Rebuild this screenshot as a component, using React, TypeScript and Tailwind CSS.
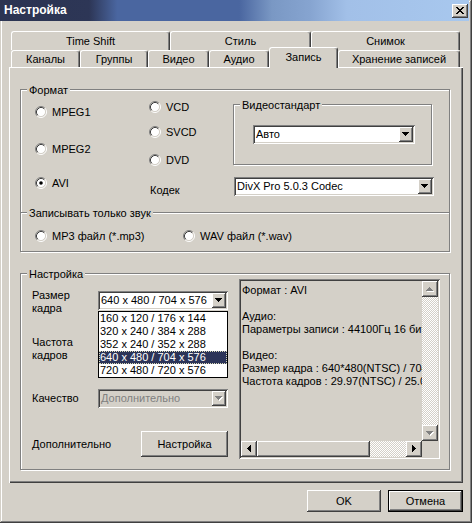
import React from "react";

// classic win9x bevels
const raised =
    "shadow-[inset_-1px_-1px_#404040,inset_1px_1px_#ffffff,inset_-2px_-2px_#808080,inset_2px_2px_#d4d0c8]";
const sunken =
    "shadow-[inset_1px_1px_#808080,inset_-1px_-1px_#ffffff,inset_2px_2px_#404040,inset_-2px_-2px_#d4d0c8]";
const etched = "border border-[#808080] shadow-[inset_1px_1px_#ffffff,1px_1px_#ffffff]";
const checker =
    "bg-[repeating-conic-gradient(#ffffff_0%_25%,#d4d0c8_0%_50%)] bg-[length:2px_2px]";

type Dir = "up" | "down" | "left" | "right";

const Arrow = ({ dir, disabled }: { dir: Dir; disabled?: boolean }) => {
    const rows = [
        [0, 7],
        [1, 5],
        [2, 3],
        [3, 1],
    ];
    const vertical = dir === "up" || dir === "down";
    const rects = (color: string, d: number) =>
        rows.map(([off, len], i) => {
            const step = dir === "down" || dir === "right" ? i : 3 - i;
            return vertical ? (
                <rect key={color + i} x={off + d} y={step + d} width={len} height={1} fill={color} />
            ) : (
                <rect key={color + i} x={step + d} y={off + d} width={1} height={len} fill={color} />
            );
        });
    return (
        <svg width={vertical ? 8 : 5} height={vertical ? 5 : 8} className="shrink-0">
            {disabled && rects("#ffffff", 1)}
            {rects(disabled ? "#808080" : "#000000", 0)}
        </svg>
    );
};

const Radio = ({ checked }: { checked?: boolean }) => (
    <svg width="12" height="12" viewBox="0 0 12 12" className="shrink-0">
        <circle cx="6" cy="6" r="4.5" fill="#ffffff" />
        <path d="M2.11 9.89 A5.5 5.5 0 0 1 9.89 2.11" fill="none" stroke="#808080" />
        <path d="M9.89 2.11 A5.5 5.5 0 0 1 2.11 9.89" fill="none" stroke="#ffffff" />
        <path d="M2.82 9.18 A4.5 4.5 0 0 1 9.18 2.82" fill="none" stroke="#404040" />
        <path d="M9.18 2.82 A4.5 4.5 0 0 1 2.82 9.18" fill="none" stroke="#d4d0c8" />
        {checked && <circle cx="6" cy="6" r="1.8" fill="#000000" />}
    </svg>
);

const RadioItem = ({ label, checked }: { label: string; checked?: boolean }) => (
    <div className="flex items-center h-[12px] whitespace-nowrap">
        <Radio checked={checked} />
        <span className="ml-[5px]">{label}</span>
    </div>
);

const Combo = ({
    value,
    width,
    disabled,
}: {
    value: string;
    width: string;
    disabled?: boolean;
}) => (
    <div
        className={`flex h-[19px] p-[2px] ${width} ${sunken} ${
            disabled ? "bg-[#d4d0c8] text-[#808080]" : "bg-white"
        }`}
    >
        <div className="flex-1 pl-[1px] leading-[15px] whitespace-nowrap overflow-hidden">
            {value}
        </div>
        <div
            className={`w-[14px] h-[15px] flex items-center justify-center bg-[#d4d0c8] ${raised}`}
        >
            <Arrow dir="down" disabled={disabled} />
        </div>
    </div>
);

const Group = ({
    label,
    className,
    children,
}: {
    label: string;
    className: string;
    children?: React.ReactNode;
}) => (
    <div className={`relative ${etched} ${className}`}>
        <span className="absolute left-[6px] -top-[6px] px-[2px] bg-[#d4d0c8] leading-[13px] whitespace-nowrap">
            {label}
        </span>
        {children}
    </div>
);

const ScrollBtn = ({ dir, disabled }: { dir: Dir; disabled?: boolean }) => (
    <div
        className={`w-[16px] h-[16px] shrink-0 flex items-center justify-center bg-[#d4d0c8] ${raised}`}
    >
        <Arrow dir={dir} disabled={disabled} />
    </div>
);

const topTabs = [
    { label: "Time Shift", w: "w-[159px]" },
    { label: "Стиль", w: "w-[141px]" },
    { label: "Снимок", w: "w-[149px]" },
];

const bottomTabs = [
    { label: "Каналы", w: "w-[69px]" },
    { label: "Группы", w: "w-[68px]" },
    { label: "Видео", w: "w-[61px]" },
    { label: "Аудио", w: "w-[60px]" },
    { label: "Запись", w: "w-[69px]", active: true },
    { label: "Хранение записей", w: "w-[122px]" },
];

const tabBase =
    "flex items-center justify-center whitespace-nowrap border-l border-t border-r border-white border-r-[#404040] rounded-t-[3px] shadow-[inset_-1px_0_#808080]";

const sizes = [
    "160 x 120 / 176 x 144",
    "320 x 240 / 384 x 288",
    "352 x 240 / 352 x 288",
    "640 x 480 / 704 x 576",
    "720 x 480 / 720 x 576",
];

const info = [
    "Формат : AVI",
    "",
    "Аудио:",
    "Параметры записи : 44100Гц 16 бит стерео",
    "",
    "Видео:",
    "Размер кадра : 640*480(NTSC) / 704*576(PAL)",
    "Частота кадров : 29.97(NTSC) / 25.00(PAL)",
];

export default function App() {
    return (
        <div className="w-[472px] h-[523px] flex flex-col overflow-hidden bg-[#d4d0c8] text-black text-[11px] leading-[13px] font-['Liberation_Sans',Arial,sans-serif] shadow-[inset_-1px_-1px_#404040,inset_1px_1px_#d4d0c8,inset_-2px_-2px_#808080,inset_2px_2px_#ffffff]">
            {/* title bar */}
            <div className="h-[21px] mr-[3px] flex items-center pl-[4px] pr-[1px] bg-[linear-gradient(to_right,#2b3452_0%,#2d3656_19%,#4a66a0_25%,#4a66a0_51%,#7a98c4_58%,#86a4d0_66%,#a2c0e8_74%,#a8c8ee_100%)]">
                <span className="flex-1 text-white font-bold text-[12px]">Настройка</span>
                <div
                    className={`w-[16px] h-[14px] flex items-center justify-center bg-[#d4d0c8] ${raised}`}
                >
                    <svg width="8" height="7">
                        {[0, 1, 2, 3, 4, 5, 6].map((i) => (
                            <React.Fragment key={i}>
                                <rect x={i} y={i} width={2} height={1} fill="#000" />
                                <rect x={6 - i} y={i} width={2} height={1} fill="#000" />
                            </React.Fragment>
                        ))}
                    </svg>
                </div>
            </div>

            {/* tabs */}
            <div className="mt-[10px] ml-[11px] h-[19px] flex">
                {topTabs.map((t) => (
                    <div key={t.label} className={`${tabBase} ${t.w} h-full`}>
                        {t.label}
                    </div>
                ))}
            </div>
            <div className="ml-[11px] h-[17px] flex items-start">
                {bottomTabs.map((t) =>
                    t.active ? (
                        <div
                            key={t.label}
                            className={`${tabBase} ${t.w} -mt-[3px] h-[21px] pb-[2px] relative z-10 bg-[#d4d0c8]`}
                        >
                            {t.label}
                        </div>
                    ) : (
                        <div key={t.label} className={`${tabBase} ${t.w} h-full`}>
                            {t.label}
                        </div>
                    )
                )}
            </div>

            {/* tab page */}
            <div className="ml-[9px] w-[454px] h-[416px] flex flex-col shadow-[inset_1px_1px_#ffffff,inset_-1px_-1px_#404040,inset_-2px_-2px_#808080]">
                <Group label="Формат" className="mt-[22px] ml-[11px] w-[430px] h-[124px] flex">
                    <div className="ml-[14px] w-[114px] flex flex-col">
                        <div className="mt-[16px]">
                            <RadioItem label="MPEG1" />
                        </div>
                        <div className="mt-[25px]">
                            <RadioItem label="MPEG2" />
                        </div>
                        <div className="mt-[22px]">
                            <RadioItem label="AVI" checked />
                        </div>
                    </div>
                    <div className="w-[84px] flex flex-col">
                        <div className="mt-[11px]">
                            <RadioItem label="VCD" />
                        </div>
                        <div className="mt-[13px]">
                            <RadioItem label="SVCD" />
                        </div>
                        <div className="mt-[16px]">
                            <RadioItem label="DVD" />
                        </div>
                        <div className="mt-[18px] pl-[1px]">Кодек</div>
                    </div>
                    <div className="flex flex-col">
                        <Group label="Видеостандарт" className="mt-[14px] w-[199px] h-[61px]">
                            <div className="ml-[19px] mt-[20px]">
                                <Combo value="Авто" width="w-[162px]" />
                            </div>
                        </Group>
                        <div className="mt-[12px] ml-[1px]">
                            <Combo value="DivX Pro 5.0.3 Codec" width="w-[200px]" />
                        </div>
                    </div>
                </Group>

                <Group label="Записывать только звук" className="-mt-[1px] ml-[11px] w-[430px] h-[40px] flex">
                    <div className="mt-[17px] ml-[14px] w-[148px]">
                        <RadioItem label="MP3 файл (*.mp3)" />
                    </div>
                    <div className="mt-[17px]">
                        <RadioItem label="WAV файл (*.wav)" />
                    </div>
                </Group>

                <Group label="Настройка" className="mt-[21px] ml-[11px] w-[430px] h-[197px] flex">
                    <div className="w-[218px] pl-[11px] flex flex-col">
                        <div className="mt-[15px] flex items-start">
                            <div className="w-[66px]">
                                Размер
                                <br />
                                кадра
                            </div>
                            <div className="mt-[2px] relative">
                                <Combo value="640 x 480 / 704 x 576" width="w-[130px]" />
                                <div className="absolute left-0 top-[20px] w-[130px] z-20 bg-white border border-black">
                                    {sizes.map((s, i) =>
                                        i === 3 ? (
                                            <div
                                                key={s}
                                                className="h-[13px] pl-[1px] leading-[13px] whitespace-nowrap bg-[#2c3458] text-white outline-1 outline-dotted outline-[#d8d8b8] -outline-offset-1"
                                            >
                                                {s}
                                            </div>
                                        ) : (
                                            <div
                                                key={s}
                                                className="h-[13px] pl-[1px] leading-[13px] whitespace-nowrap"
                                            >
                                                {s}
                                            </div>
                                        )
                                    )}
                                </div>
                            </div>
                        </div>
                        <div className="mt-[21px] w-[66px]">
                            Частота
                            <br />
                            кадров
                        </div>
                        <div className="mt-[27px] flex items-start">
                            <div className="w-[66px] mt-[3px]">Качество</div>
                            <Combo value="Дополнительно" width="w-[130px]" disabled />
                        </div>
                        <div className="mt-[23px] flex items-center">
                            <div className="w-[66px] whitespace-nowrap">Дополнительно</div>
                            <div
                                className={`ml-[43px] w-[87px] h-[26px] flex items-center justify-center bg-[#d4d0c8] ${raised}`}
                            >
                                Настройка
                            </div>
                        </div>
                    </div>

                    {/* info box */}
                    <div className={`mt-[5px] w-[201px] h-[180px] p-[2px] flex flex-col ${sunken}`}>
                        <div className="flex h-[160px]">
                            <div className="flex-1 pl-[1px] pt-[3px] overflow-hidden whitespace-nowrap">
                                {info.map((l, i) => (
                                    <div key={i} className="h-[13px]">
                                        {l}
                                    </div>
                                ))}
                            </div>
                            <div className="w-[16px] flex flex-col">
                                <ScrollBtn dir="up" disabled />
                                <div className={`flex-1 ${checker}`} />
                                <ScrollBtn dir="down" disabled />
                            </div>
                        </div>
                        <div className="flex h-[16px]">
                            <ScrollBtn dir="left" />
                            <div className={`w-[113px] h-[16px] bg-[#d4d0c8] ${raised}`} />
                            <div className={`flex-1 ${checker}`} />
                            <ScrollBtn dir="right" />
                            <div className="w-[16px]" />
                        </div>
                    </div>
                </Group>
            </div>

            {/* dialog buttons */}
            <div className="mt-[7px] pr-[9px] flex justify-end gap-[7px]">
                <div
                    className={`w-[74px] h-[22px] flex items-center justify-center bg-[#d4d0c8] ${raised}`}
                >
                    OK
                </div>
                <div className="w-[75px] h-[22px] border border-black flex">
                    <div
                        className={`flex-1 flex items-center justify-center bg-[#d4d0c8] ${raised}`}
                    >
                        Отмена
                    </div>
                </div>
            </div>
        </div>
    );
}
